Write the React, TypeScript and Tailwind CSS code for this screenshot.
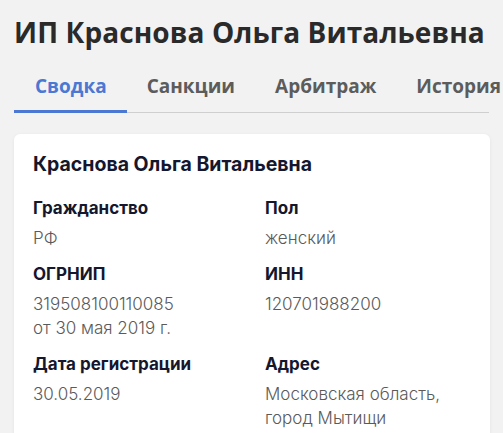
export default function App() {
  const rows: [string, string[], string, string[]][] = [
    ["Гражданство", ["РФ"], "Пол", ["женский"]],
    ["ОГРНИП", ["319508100110085", "от 30 мая 2019 г."], "ИНН", ["120701988200"]],
    ["Дата регистрации", ["30.05.2019"], "Адрес", ["Московская область,", "город Мытищи"]],
  ];
  return (
    <div className="min-h-screen bg-[#f2f2f2] px-[14px] pt-[14px] pb-6">
      <h1 className="font-['Open_Sans',sans-serif] text-[28px] leading-[36px] font-bold tracking-[0.1px] text-[#2a2a2a] whitespace-nowrap">
        ИП Краснова Ольга Витальевна
      </h1>
      <div className="mt-[24px] flex border-b border-[#cfcfcf] font-['Open_Sans',sans-serif] text-[19px] leading-[24px] font-bold whitespace-nowrap">
        <div className="-mb-px pl-[21px] pr-[20px] pb-[12px] border-b-[3px] border-[#4a78d2] text-[#4a78d2]">Сводка</div>
        <div className="-mb-px px-[20px] pb-[12px] text-[#5c5c5c]">Санкции</div>
        <div className="-mb-px px-[20px] pb-[12px] text-[#5c5c5c]">Арбитраж</div>
        <div className="-mb-px px-[20px] pb-[12px] text-[#5c5c5c]">История</div>
      </div>
      <div className="mt-[21px] w-[476px] rounded-md bg-white px-[19px] pt-[16px] pb-5 shadow-[0_1px_4px_rgba(0,0,0,0.06)] font-['Inter',sans-serif]">
        <div className="text-[19.5px] leading-[28px] font-bold text-[#14172e]">Краснова Ольга Витальевна</div>
        <div className="mt-[18px] grid grid-cols-2 gap-x-[26px] gap-y-[12px]">
          {rows.map(([l1, v1, l2, v2]) => (
            <>
              <div key={l1}>
                <div className="text-[17px] leading-[24px] font-bold text-[#14172e]">{l1}</div>
                <div className="mt-[6px] text-[17px] leading-[24px] font-light text-[#5a5a5a]">
                  {v1.map((v) => (
                    <div key={v}>{v}</div>
                  ))}
                </div>
              </div>
              <div key={l2}>
                <div className="text-[17px] leading-[24px] font-bold text-[#14172e]">{l2}</div>
                <div className="mt-[6px] text-[17px] leading-[24px] font-light text-[#5a5a5a]">
                  {v2.map((v) => (
                    <div key={v}>{v}</div>
                  ))}
                </div>
              </div>
            </>
          ))}
        </div>
      </div>
    </div>
  );
}
